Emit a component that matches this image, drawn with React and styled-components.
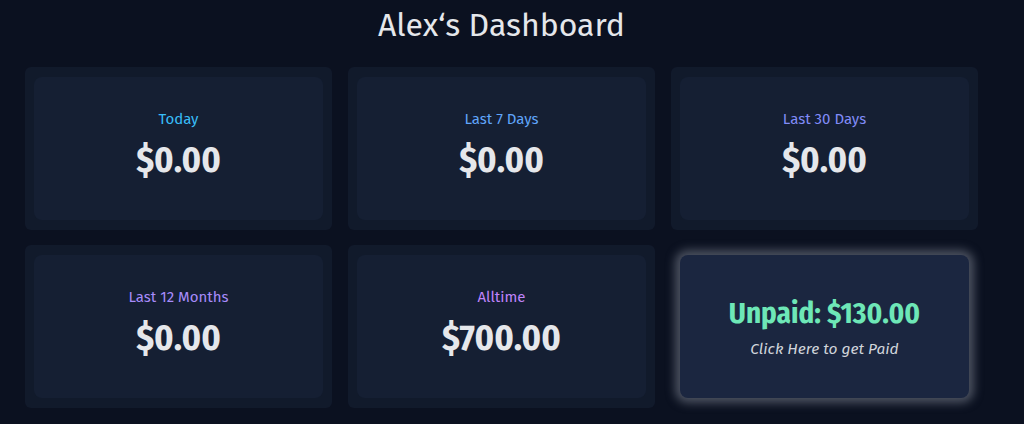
import React from "react";
import styled, { createGlobalStyle } from "styled-components";

const Global = createGlobalStyle`
  html, body { margin: 0; padding: 0; background: #0b1120; }
  body { font-family: "Fira Sans", "Open Sans", "DejaVu Sans", sans-serif; }
`;

const Page = styled.div`
  width: 1024px;
  height: 424px;
  box-sizing: border-box;
  padding: 0 46px 0 25px;
  overflow: hidden;
`;

const Title = styled.h1`
  margin: 0;
  padding-top: 5px;
  height: 67px;
  box-sizing: border-box;
  text-align: center;
  font-size: 32px;
  line-height: 40px;
  font-weight: 400;
  color: #e5e7eb;
`;

const Grid = styled.div`
  display: grid;
  grid-template-columns: repeat(3, 307px);
  column-gap: 16px;
  row-gap: 15px;
`;

const Outer = styled.div`
  height: 163px;
  box-sizing: border-box;
  padding: 10px 9px;
  border-radius: 6px;
  background: ${(p) => (p.$plain ? "transparent" : "#111a2b")};
`;

const Inner = styled.div`
  height: 100%;
  border-radius: 8px;
  background: ${(p) => (p.$highlight ? "#1b2640" : "#151f33")};
  box-shadow: ${(p) => (p.$highlight ? "0 0 10px 5px rgba(140,146,160,0.5)" : "none")};
  display: flex;
  flex-direction: column;
  align-items: center;
  justify-content: center;
  cursor: ${(p) => (p.$highlight ? "pointer" : "default")};
`;

const Label = styled.div`
  font-size: 15px;
  line-height: 20px;
  color: ${(p) => p.$color};
  margin-top: -6px;
`;

const Value = styled.div`
  font-family: "Fira Sans Condensed", "Fira Sans", sans-serif;
  font-size: 36px;
  line-height: 44px;
  font-weight: 700;
  color: #e5e7eb;
  margin-top: 9px;
`;

const Unpaid = styled.div`
  font-family: "Fira Sans Condensed", "Fira Sans", sans-serif;
  font-size: 29px;
  line-height: 38px;
  font-weight: 700;
  color: #6ee7b7;
`;

const Hint = styled.div`
  font-size: 15.5px;
  line-height: 20px;
  font-style: italic;
  color: #d1d5db;
  margin-top: 6px;
`;

const stats = [
  { label: "Today", value: "$0.00", color: "#38bdf8" },
  { label: "Last 7 Days", value: "$0.00", color: "#60a5fa" },
  { label: "Last 30 Days", value: "$0.00", color: "#818cf8" },
  { label: "Last 12 Months", value: "$0.00", color: "#a78bfa" },
  { label: "Alltime", value: "$700.00", color: "#c084fc" },
];

export default function App() {
  return (
    <Page>
      <Global />
      <Title>Alex‘s Dashboard</Title>
      <Grid>
        {stats.map((s) => (
          <Outer key={s.label}>
            <Inner>
              <Label $color={s.color}>{s.label}</Label>
              <Value>{s.value}</Value>
            </Inner>
          </Outer>
        ))}
        <Outer $plain>
          <Inner $highlight>
            <Unpaid>Unpaid: $130.00</Unpaid>
            <Hint>Click Here to get Paid</Hint>
          </Inner>
        </Outer>
      </Grid>
    </Page>
  );
}
